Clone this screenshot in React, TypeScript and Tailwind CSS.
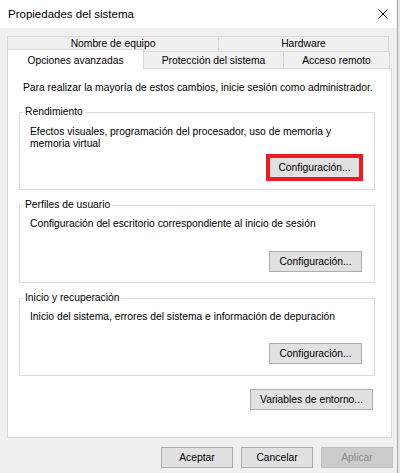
import React from "react";

const font = { fontFamily: '"Liberation Sans", Arial, sans-serif' };

function Btn({ label, w = 93, disabled = false }: { label: string; w?: number; disabled?: boolean }) {
  return (
    <div
      className={
        "h-[21px] flex items-center justify-center border text-[10.3px] leading-[12px] " +
        (disabled ? "bg-[#cccccc] border-[#bfbfbf] text-[#8a8a8a]" : "bg-[#e1e1e1] border-[#adadad] text-black")
      }
      style={{ width: w }}
    >
      {label}
    </div>
  );
}

function Group({
  title,
  children,
  className = "",
}: {
  title: string;
  children: React.ReactNode;
  className?: string;
}) {
  return (
    <fieldset className={"border border-[#dcdcdc] m-0 p-0 min-w-0 " + className}>
      <legend className="ml-[3px] px-[2px] text-[10.3px] leading-[12px] text-black">{title}</legend>
      {children}
    </fieldset>
  );
}

export default function App() {
  return (
    <div className="w-[400px] h-[473px] bg-[#e6e6e6] flex overflow-hidden" style={font}>
      <div className="w-[398px] h-[473px] bg-[#f0f0f0] border-r border-[#a8a8a8] flex flex-col">
        {/* Title bar */}
        <div className="h-[28px] bg-white flex items-center justify-between pl-[8px] pr-[9px] shrink-0">
          <span className="text-[11.5px] leading-[14px] text-black">Propiedades del sistema</span>
          <svg width="10" height="10" viewBox="0 0 10 10" className="block">
            <path d="M0.5 0.5 L9.5 9.5 M9.5 0.5 L0.5 9.5" stroke="#000" strokeWidth="1" fill="none" />
          </svg>
        </div>

        {/* Tabs + panel */}
        <div className="pt-[8px] pl-[7px] flex flex-col">
          <div className="flex h-[15px] text-[10.3px] leading-[12px] text-black">
            <div className="w-[212px] border-t border-l border-r border-[#d9d9d9] bg-[#f0f0f0] flex items-center justify-center">
              Nombre de equipo
            </div>
            <div className="w-[171px] -ml-px border-t border-l border-r border-[#d9d9d9] bg-[#f0f0f0] flex items-center justify-center">
              Hardware
            </div>
          </div>
          <div className="flex items-end h-[17px] text-[10.3px] leading-[12px] text-black">
            <div className="relative z-10 w-[137px] h-[20px] -mb-px border-t border-l border-r border-[#d9d9d9] bg-white flex items-center justify-center pt-[2px]">
              Opciones avanzadas
            </div>
            <div className="w-[141px] -ml-px h-[17px] border-t border-l border-r border-[#d9d9d9] bg-[#f0f0f0] flex items-center justify-center pt-px">
              Protección del sistema
            </div>
            <div className="w-[107px] -ml-px h-[17px] border-t border-l border-r border-[#d9d9d9] bg-[#f0f0f0] flex items-center justify-center pt-px">
              Acceso remoto
            </div>
          </div>

          <div className="w-[385px] h-[370px] bg-white border border-[#d9d9d9] pl-[11px] pr-[16px] pt-[13px] flex flex-col text-[10.3px] leading-[12px] text-black">
            <div className="ml-[4px]">
              Para realizar la mayoría de estos cambios, inicie sesión como administrador.
            </div>

            <Group title="Rendimiento" className="mt-[12px]">
              <div className="pl-[10px] pt-[8px]">
                Efectos visuales, programación del procesador, uso de memoria y
                <br />
                memoria virtual
              </div>
              <div className="flex justify-end mt-[4px] mr-[11px] mb-[8px]">
                <div className="border-4 border-[#ed1c24]">
                  <div className="w-[89px] h-[19px] bg-[#e1e1e1] flex items-center justify-center">
                    Configuración...
                  </div>
                </div>
              </div>
            </Group>

            <Group title="Perfiles de usuario" className="mt-[9px]">
              <div className="pl-[10px] pt-[7px]">Configuración del escritorio correspondiente al inicio de sesión</div>
              <div className="flex justify-end mt-[21px] mr-[12px] mb-[10px]">
                <Btn label="Configuración..." />
              </div>
            </Group>

            <Group title="Inicio y recuperación" className="mt-[9px]">
              <div className="pl-[10px] pt-[7px]">Inicio del sistema, errores del sistema e información de depuración</div>
              <div className="flex justify-end mt-[20px] mr-[12px] mb-[11px]">
                <Btn label="Configuración..." />
              </div>
            </Group>

            <div className="flex justify-end mt-[13px] mr-[2px]">
              <Btn label="Variables de entorno..." w={123} />
            </div>
          </div>
        </div>

        {/* Bottom buttons */}
        <div className="flex justify-end gap-[8px] mt-[9px] pr-[4px]">
          <Btn label="Aceptar" w={72} />
          <Btn label="Cancelar" w={72} />
          <Btn label="Aplicar" w={72} disabled />
        </div>
      </div>
    </div>
  );
}
